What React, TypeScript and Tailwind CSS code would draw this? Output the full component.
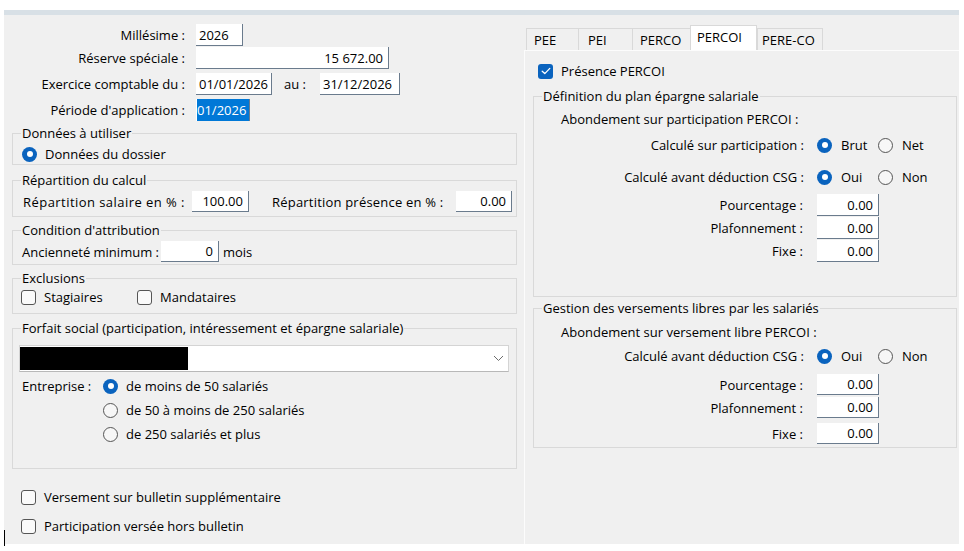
import React from "react";

function Field({
  className,
  children,
  right,
}: {
  className: string;
  children?: React.ReactNode;
  right?: boolean;
}) {
  return (
    <div
      className={`bg-white border-r border-b border-[#6a7b8d] flex items-center whitespace-nowrap ${
        right ? "justify-end pr-[5px]" : "pl-[3px]"
      } ${className}`}
    >
      {children}
    </div>
  );
}

function Radio({ checked }: { checked?: boolean }) {
  return checked ? (
    <span className="w-[15px] h-[15px] rounded-full bg-[#0a63be] flex items-center justify-center shrink-0">
      <span className="w-[6px] h-[6px] rounded-full bg-white" />
    </span>
  ) : (
    <span className="w-[15px] h-[15px] rounded-full border border-[#555] bg-[#f7f7f7] shrink-0" />
  );
}

function Check({ checked }: { checked?: boolean }) {
  return checked ? (
    <span className="w-[15px] h-[15px] rounded-[3px] bg-[#0a63be] flex items-center justify-center shrink-0">
      <svg width="10" height="8" viewBox="0 0 10 8" fill="none">
        <path d="M1.2 4.2 L3.8 6.6 L8.8 1.4" stroke="white" strokeWidth="1.3" strokeLinecap="round" strokeLinejoin="round" />
      </svg>
    </span>
  ) : (
    <span className="w-[15px] h-[15px] rounded-[3px] border border-[#555] bg-[#fafafa] shrink-0" />
  );
}

function Group({
  label,
  className,
  children,
}: {
  label: string;
  className: string;
  children?: React.ReactNode;
}) {
  return (
    <fieldset className={`border border-[#d9d9d9] pl-[9px] ${className}`}>
      <legend className="px-[1px] -ml-[1px] leading-[16px] whitespace-nowrap">{label}</legend>
      {children}
    </fieldset>
  );
}

function LeftPane() {
  return (
    <div className="w-[520px] flex flex-col pt-[9px]">
      <div className="flex items-center h-[22px]">
        <span className="w-[181px] text-right whitespace-nowrap">Millésime :</span>
        <Field className="ml-[11px] w-[47px] h-[22px]">2026</Field>
      </div>
      <div className="flex items-center h-[22px] mt-[1px]">
        <span className="w-[181px] text-right whitespace-nowrap">Réserve spéciale :</span>
        <Field className="ml-[11px] w-[193px] h-[22px]" right>
          15 672.00
        </Field>
      </div>
      <div className="flex items-center h-[22px] mt-[4px]">
        <span className="w-[181px] text-right whitespace-nowrap">Exercice comptable du :</span>
        <Field className="ml-[11px] w-[76px] h-[22px]">01/01/2026</Field>
        <span className="ml-[12px] w-[25px] whitespace-nowrap">au :</span>
        <Field className="ml-[11px] w-[80px] h-[22px]">31/12/2026</Field>
      </div>
      <div className="flex items-center h-[22px] mt-[4px]">
        <span className="w-[181px] text-right whitespace-nowrap">Période d'application :</span>
        <div className="ml-[11px] w-[54px] h-[22px] bg-white border-r border-[#6a7b8d] flex items-stretch">
          <span className="ml-[1px] flex-1 bg-[#0078d7] text-white flex items-center">01/2026</span>
        </div>
      </div>

      <Group label="Données à utiliser" className="ml-[8px] w-[505px] mt-[4px] pt-[4px] pb-[1px]">
        <div className="flex items-center h-[18px]">
          <Radio checked />
          <span className="ml-[8px]">Données du dossier</span>
        </div>
      </Group>

      <Group label="Répartition du calcul" className="ml-[8px] w-[505px] mt-[7px] pt-[3px] pb-[4px]">
        <div className="flex items-center h-[21px]">
          <span className="w-[163px] whitespace-nowrap pl-[1px] tracking-[0.45px]">Répartition salaire en % :</span>
          <Field className="ml-[7px] w-[57px] h-[21px]" right>
            100.00
          </Field>
          <span className="ml-[23px] w-[172px] whitespace-nowrap tracking-[0.2px]">Répartition présence en % :</span>
          <Field className="ml-[12px] w-[56px] h-[21px]" right>
            0.00
          </Field>
        </div>
      </Group>

      <Group label="Condition d'attribution" className="ml-[8px] w-[505px] mt-[5px] pt-[3px] pb-[2px]">
        <div className="flex items-center h-[21px]">
          <span className="whitespace-nowrap">Ancienneté minimum :</span>
          <Field className="ml-[2px] w-[58px] h-[21px]" right>
            0
          </Field>
          <span className="ml-[4px]">mois</span>
        </div>
      </Group>

      <Group label="Exclusions" className="ml-[8px] w-[505px] mt-[5px] pt-[3px] pb-[8px]">
        <div className="flex items-center h-[16px] -ml-[1px]">
          <div className="w-[116px] flex items-center">
            <Check />
            <span className="ml-[8px]">Stagiaires</span>
          </div>
          <Check />
          <span className="ml-[8px]">Mandataires</span>
        </div>
      </Group>

      <Group
        label="Forfait social (participation, intéressement et épargne salariale)"
        className="ml-[8px] w-[505px] mt-[6px] pt-[9px] pb-[25px]"
      >
        <div className="-ml-[3px] w-[490px] h-[27px] bg-white border border-[#d4d4d4] border-b-[#b8b8b8] flex items-center">
          <div className="w-[168px] h-[23px] bg-black" />
          <svg className="ml-auto mr-[4px]" width="11" height="7" viewBox="0 0 11 7" fill="none">
            <path d="M1 1 L5.5 5.5 L10 1" stroke="#6d6d6d" strokeWidth="1" />
          </svg>
        </div>
        <div className="flex mt-[5px]">
          <span className="w-[81px] leading-[18px] whitespace-nowrap">Entreprise :</span>
          <div className="flex flex-col gap-[6px]">
            <div className="flex items-center h-[18px]">
              <Radio checked />
              <span className="ml-[8px]">de moins de 50 salariés</span>
            </div>
            <div className="flex items-center h-[18px]">
              <Radio />
              <span className="ml-[8px]">de 50 à moins de 250 salariés</span>
            </div>
            <div className="flex items-center h-[18px]">
              <Radio />
              <span className="ml-[8px]">de 250 salariés et plus</span>
            </div>
          </div>
        </div>
      </Group>

      <div className="flex items-center h-[16px] mt-[20px] ml-[17px]">
        <Check />
        <span className="ml-[8px]">Versement sur bulletin supplémentaire</span>
      </div>
      <div className="flex items-center h-[16px] mt-[13px] ml-[17px]">
        <Check />
        <span className="ml-[8px]">Participation versée hors bulletin</span>
      </div>
    </div>
  );
}

function Tab({
  label,
  className,
  selected,
}: {
  label: string;
  className: string;
  selected?: boolean;
}) {
  return (
    <div
      className={`flex items-center whitespace-nowrap border-t border-l border-[#d9d9d9] ${
        selected ? "h-[25px] bg-white border-r pb-[3px]" : "h-[22px] bg-[#f0f0f0]"
      } ${className}`}
    >
      {label}
    </div>
  );
}

function RadioPair({ a, b }: { a: string; b: string }) {
  return (
    <div className="ml-[13px] flex items-center">
      <div className="w-[61px] flex items-center">
        <Radio checked />
        <span className="ml-[9px]">{a}</span>
      </div>
      <Radio />
      <span className="ml-[9px]">{b}</span>
    </div>
  );
}

function NumRow({ label, className }: { label: string; className: string }) {
  return (
    <div className={`flex items-center ${className}`}>
      <span className="w-[260px] text-right">{label}</span>
      <Field className="ml-[14px] w-[62px] h-full" right>
        0.00
      </Field>
    </div>
  );
}

function RightPane() {
  return (
    <div className="flex-1 flex flex-col pt-[10px]">
      <div className="flex items-end h-[25px] pl-[2px]">
        <Tab label="PEE" className="w-[52px] pl-[7px]" />
        <Tab label="PEI" className="w-[54px] pl-[9px]" />
        <Tab label="PERCO" className="w-[58px] pl-[7px]" />
        <Tab label="PERCOI" className="w-[67px] pl-[6px]" selected />
        <Tab label="PERE-CO" className="w-[66px] pl-[4px] border-r" />
      </div>
      <div className="flex-1 flex flex-col border-t border-l border-[#fcfcfc]">
        <div className="flex items-center h-[16px] mt-[12px] ml-[13px]">
          <Check checked />
          <span className="ml-[8px]">Présence PERCOI</span>
        </div>

        <Group label="Définition du plan épargne salariale" className="ml-[8px] mr-[2px] mt-[9px] pt-[7px] pb-[34px]">
          <div className="h-[16px] flex items-center ml-[18px]">Abondement sur participation PERCOI :</div>
          <div className="flex items-center h-[18px] mt-[9px]">
            <span className="w-[261px] text-right">Calculé sur participation :</span>
            <RadioPair a="Brut" b="Net" />
          </div>
          <div className="flex items-center h-[18px] mt-[14px]">
            <span className="w-[261px] text-right">Calculé avant déduction CSG :</span>
            <RadioPair a="Oui" b="Non" />
          </div>
          <NumRow label="Pourcentage :" className="h-[22px] mt-[8px]" />
          <NumRow label="Plafonnement :" className="h-[22px] mt-[1px]" />
          <NumRow label="Fixe :" className="h-[22px] mt-[1px]" />
        </Group>

        <Group label="Gestion des versements libres par les salariés" className="ml-[8px] mr-[2px] mt-[3px] pt-[8px] pb-[3px]">
          <div className="h-[16px] flex items-center ml-[18px]">Abondement sur versement libre PERCOI :</div>
          <div className="flex items-center h-[18px] mt-[7px]">
            <span className="w-[261px] text-right">Calculé avant déduction CSG :</span>
            <RadioPair a="Oui" b="Non" />
          </div>
          <NumRow label="Pourcentage :" className="h-[21px] mt-[9px]" />
          <NumRow label="Plafonnement :" className="h-[21px] mt-[2px]" />
          <NumRow label="Fixe :" className="h-[21px] mt-[5px]" />
        </Group>
      </div>
    </div>
  );
}

export default function App() {
  return (
    <div className="relative w-[964px] h-[551px] bg-white overflow-hidden text-[13px] leading-[16px] text-black font-['Open_Sans',sans-serif]">
      <div className="h-[10px]" />
      <div className="ml-[4px] w-[955px] h-[5px] bg-[#d8e0e6]" />
      <div className="ml-[4px] w-[955px] h-[529px] bg-[#f0f0f0] flex">
        <LeftPane />
        <RightPane />
      </div>
      <div className="absolute left-[4px] top-[530px] w-px h-[16px] bg-black" />
    </div>
  );
}
